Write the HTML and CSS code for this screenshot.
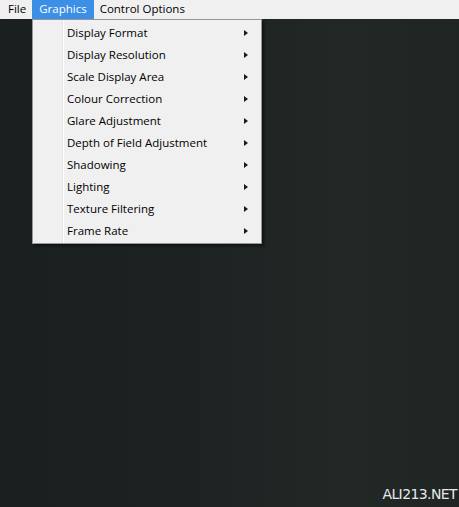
FILE: index.html
```html
<!DOCTYPE html>
<html lang="en">
<head>
    <meta charset="UTF-8">
    <title>Graphics Menu</title>
    <link rel="stylesheet" href="styles.css">
</head>
<body>
    <div class="menubar">
        <span class="menubar-item">File</span>
        <span class="menubar-item active">Graphics</span>
        <span class="menubar-item">Control Options</span>
    </div>

    <div class="screen">
        <!-- Выпадающее меню Graphics -->
        <ul class="dropdown">
            <li>Display Format</li>
            <li>Display Resolution</li>
            <li>Scale Display Area</li>
            <li>Colour Correction</li>
            <li>Glare Adjustment</li>
            <li>Depth of Field Adjustment</li>
            <li>Shadowing</li>
            <li>Lighting</li>
            <li>Texture Filtering</li>
            <li>Frame Rate</li>
        </ul>
        <div class="watermark">ALI213.NET</div>
    </div>
</body>
</html>
```

FILE: styles.css
```css
* {
    margin: 0;
    padding: 0;
    box-sizing: border-box;
}

body {
    font-family: "Open Sans", "Noto Sans", sans-serif;
    font-size: 11.5px;
    width: 459px;
    height: 507px;
    overflow: hidden;
    background: #1c2221;
    display: flex;
    flex-direction: column;
}

.menubar {
    height: 19px;
    background: #f0f0f0;
    display: flex;
    padding-left: 2px;
    color: #000;
}

.menubar-item {
    padding: 0 6px;
    line-height: 18px;
    height: 19px;
}

.menubar-item.active {
    background: #3c8fe6;
    color: #fff;
    padding: 0 7px;
}

.screen {
    flex: 1;
    position: relative;
    background: linear-gradient(90deg, #19201f 0%, #1c2322 45%, #222826 75%, #1f2523 100%);
}

.dropdown {
    position: absolute;
    left: 32px;
    top: 0;
    width: 230px;
    list-style: none;
    background: #f0f0f0;
    border: 1px solid #979797;
    padding: 2px 2px 1px 2px;
    box-shadow: 2px 2px 2px rgba(0, 0, 0, 0.45);
    background-image: linear-gradient(90deg, transparent 29px, #e2e2e2 29px, #e2e2e2 30px, #ffffff 30px, #ffffff 31px, transparent 31px);
}

.dropdown li {
    position: relative;
    height: 22px;
    line-height: 22px;
    padding-left: 32px;
    color: #000;
}

.dropdown li::after {
    content: "";
    position: absolute;
    right: 11px;
    top: 8px;
    border-left: 4px solid #1a1a1a;
    border-top: 3.5px solid transparent;
    border-bottom: 3.5px solid transparent;
}

.watermark {
    position: absolute;
    right: 2px;
    bottom: 5px;
    color: #e8e8e8;
    font-family: "DejaVu Sans", sans-serif;
    font-size: 14px;
    letter-spacing: -0.6px;
}
```
